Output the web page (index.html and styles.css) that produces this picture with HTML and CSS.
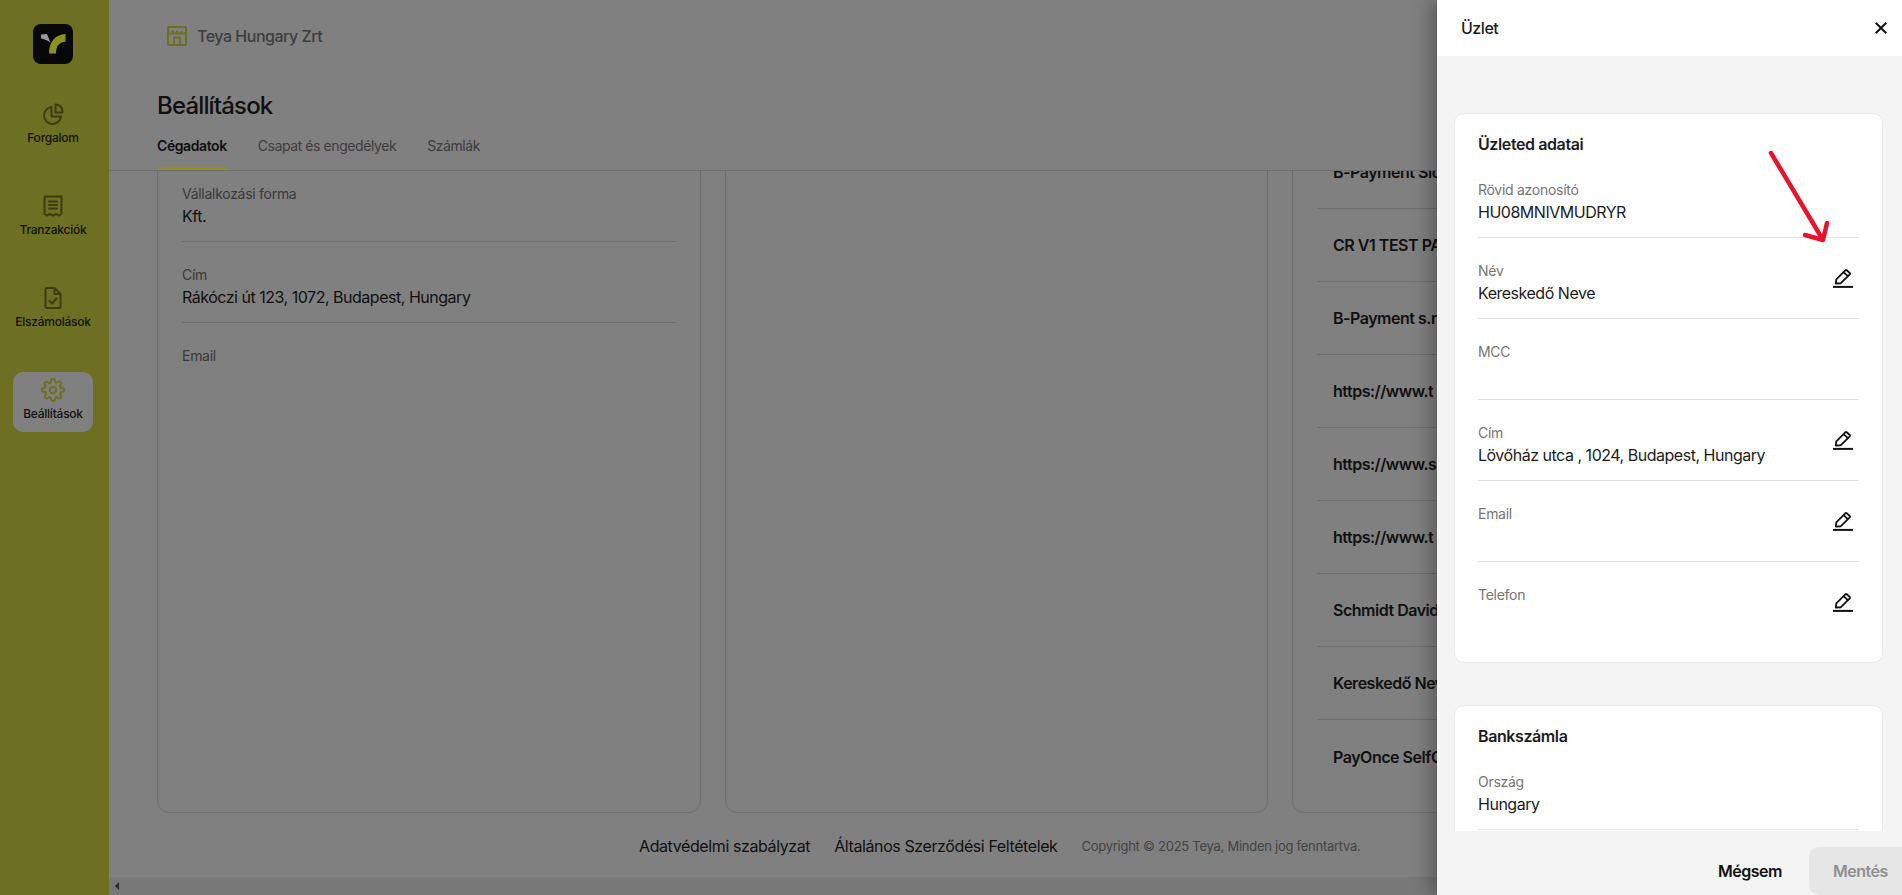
FILE: index.html
```html
<!DOCTYPE html>
<html lang="hu">
<head>
<meta charset="utf-8">
<title>Beállítások</title>
<link rel="stylesheet" href="styles.css">
</head>
<body>
<div class="app">
  <aside class="sidebar">
    <svg class="logo" viewBox="0 0 40 40">
      <rect width="40" height="40" rx="8" fill="#0e0e0e"/>
      <path d="M8 10.5 L14 10 L17.5 18.5 C14.5 16.5 11 15 8 14.5 Z" fill="#fff"/>
      <path d="M32.5 10 C22 10.5 16 18 16 29.5 H23 C23 22 26 18 32.5 17.7 Z" fill="#ebf235"/>
    </svg>
    <nav class="nav">
      <a class="nav-item">
        <svg class="nav-icon" viewBox="0 0 24 24"><path d="M10.5 5 A8.5 8.5 0 1 0 20 14.5 H10.5 Z"/><path d="M14.5 2.5 A7 7 0 0 1 21.5 9.5 V10.5 H14.5 Z"/></svg>
        <span>Forgalom</span>
      </a>
      <a class="nav-item">
        <svg class="nav-icon" viewBox="0 0 24 24"><path d="M3.5 2.5 H20.5 V20 L18 21.5 L15 20 L12 21.5 L9 20 L6 21.5 L3.5 20 Z"/><path d="M8 7.5 H16 M8 11 H16 M8 14.5 H16"/></svg>
        <span>Tranzakciók</span>
      </a>
      <a class="nav-item">
        <svg class="nav-icon" viewBox="0 0 24 24"><path d="M13.5 2 H6 A1.5 1.5 0 0 0 4.5 3.5 V20.5 A1.5 1.5 0 0 0 6 22 H18 A1.5 1.5 0 0 0 19.5 20.5 V8 Z"/><path d="M13.5 2 V8 H19.5"/><path d="M8.5 15 L11 17.5 L15.5 12.5"/></svg>
        <span>Elszámolások</span>
      </a>
      <a class="nav-item active">
        <svg class="nav-icon" viewBox="0 0 24 24"><circle cx="12" cy="12" r="3.2"/><path d="M19.4 15a1.65 1.65 0 0 0 .33 1.82l.06.06a2 2 0 1 1-2.83 2.83l-.06-.06a1.65 1.65 0 0 0-2.82 1.17V21a2 2 0 1 1-4 0v-.09a1.65 1.65 0 0 0-2.82-1.08l-.06.06a2 2 0 1 1-2.83-2.83l.06-.06A1.65 1.65 0 0 0 3.09 14H3a2 2 0 1 1 0-4h.09a1.65 1.65 0 0 0 1.08-2.82l-.06-.06a2 2 0 1 1 2.83-2.83l.06.06A1.65 1.65 0 0 0 10 3.09V3a2 2 0 1 1 4 0v.09a1.65 1.65 0 0 0 2.82 1.08l.06-.06a2 2 0 1 1 2.83 2.83l-.06.06A1.65 1.65 0 0 0 20.91 10H21a2 2 0 1 1 0 4h-.09a1.65 1.65 0 0 0-1.51 1z"/></svg>
        <span>Beállítások</span>
      </a>
    </nav>
  </aside>

  <main class="main">
    <div class="merchant">
      <svg class="store-icon" viewBox="0 0 20 20"><rect x="1" y="1" width="18" height="18" rx="1.5"/><path d="M1 7.5 H19 M5.5 4.5 V7.5 M10 4.5 V7.5 M14.5 4.5 V7.5"/><path d="M7 19 V11.5 H13 V19"/></svg>
      <span>Teya Hungary Zrt</span>
    </div>
    <h1 class="page-title">Beállítások</h1>
    <div class="tabs">
      <a class="tab active">Cégadatok</a>
      <a class="tab">Csapat és engedélyek</a>
      <a class="tab">Számlák</a>
    </div>
    <div class="content">
      <div class="cards">
        <section class="panel panel-company">
          <div class="field"><span class="label">Vállalkozási forma</span><span class="value">Kft.</span></div>
          <div class="field"><span class="label">Cím</span><span class="value">Rákóczi út 123, 1072, Budapest, Hungary</span></div>
          <div class="field field-last"><span class="label">Email</span><span class="value"></span></div>
        </section>
        <section class="panel"></section>
        <section class="panel panel-list">
          <div class="list-row">B-Payment Sid</div>
          <div class="list-row">CR V1 TEST PA</div>
          <div class="list-row">B-Payment s.r.</div>
          <div class="list-row">https://www.t</div>
          <div class="list-row">https://www.s</div>
          <div class="list-row">https://www.t</div>
          <div class="list-row">Schmidt David</div>
          <div class="list-row">Kereskedő Nev</div>
          <div class="list-row">PayOnce SelfC</div>
        </section>
      </div>
      <footer class="page-footer">
        <a>Adatvédelmi szabályzat</a>
        <a>Általános Szerződési Feltételek</a>
        <span class="copyright">Copyright © 2025 Teya, Minden jog fenntartva.</span>
      </footer>
    </div>
    <div class="hscroll"><i class="hscroll-arrow"></i></div>
  </main>
</div>

<div class="overlay"></div>

<aside class="drawer">
  <header class="drawer-head">
    <span>Üzlet</span>
    <svg class="close" viewBox="0 0 12 12"><path d="M.7 .7 L11.3 11.3 M11.3 .7 L.7 11.3"/></svg>
  </header>
  <div class="drawer-body">
    <section class="sheet">
      <h2>Üzleted adatai</h2>
      <div class="field"><div><span class="label">Rövid azonosító</span><span class="value">HU08MNIVMUDRYR</span></div></div>
      <div class="field">
        <div><span class="label">Név</span><span class="value">Kereskedő Neve</span></div>
        <svg class="pencil" viewBox="0 0 20 20"><path d="M2.8 15.5 L3.3 11.3 L12.3 2.3 Q13 1.7 13.7 2.3 L16.8 5 Q17.4 5.7 16.8 6.4 L7.6 15.3 Z"/><path d="M10.5 4.2 L14.9 8.2"/><path class="pencil-line" d="M0 18.9 H20"/></svg>
      </div>
      <div class="field"><div><span class="label">MCC</span><span class="value"></span></div></div>
      <div class="field">
        <div><span class="label">Cím</span><span class="value">Lövőház utca , 1024, Budapest, Hungary</span></div>
        <svg class="pencil" viewBox="0 0 20 20"><path d="M2.8 15.5 L3.3 11.3 L12.3 2.3 Q13 1.7 13.7 2.3 L16.8 5 Q17.4 5.7 16.8 6.4 L7.6 15.3 Z"/><path d="M10.5 4.2 L14.9 8.2"/><path class="pencil-line" d="M0 18.9 H20"/></svg>
      </div>
      <div class="field">
        <div><span class="label">Email</span><span class="value"></span></div>
        <svg class="pencil" viewBox="0 0 20 20"><path d="M2.8 15.5 L3.3 11.3 L12.3 2.3 Q13 1.7 13.7 2.3 L16.8 5 Q17.4 5.7 16.8 6.4 L7.6 15.3 Z"/><path d="M10.5 4.2 L14.9 8.2"/><path class="pencil-line" d="M0 18.9 H20"/></svg>
      </div>
      <div class="field field-last">
        <div><span class="label">Telefon</span><span class="value"></span></div>
        <svg class="pencil" viewBox="0 0 20 20"><path d="M2.8 15.5 L3.3 11.3 L12.3 2.3 Q13 1.7 13.7 2.3 L16.8 5 Q17.4 5.7 16.8 6.4 L7.6 15.3 Z"/><path d="M10.5 4.2 L14.9 8.2"/><path class="pencil-line" d="M0 18.9 H20"/></svg>
      </div>
    </section>
    <section class="sheet">
      <h2>Bankszámla</h2>
      <div class="field"><div><span class="label">Ország</span><span class="value">Hungary</span></div></div>
    </section>
  </div>
  <footer class="drawer-foot">
    <button class="btn-text">Mégsem</button>
    <button class="btn-save">Mentés</button>
  </footer>
</aside>

<svg class="annotation" viewBox="0 0 70 100"><path d="M6 6 L58 93 M62 76 L58 93 L40 88"/></svg>
</body>
</html>
```

FILE: styles.css
```css
* { box-sizing: border-box; }

html, body {
  margin: 0;
  height: 100%;
  overflow: hidden;
}

body {
  position: relative;
  font-family: Inter, "Noto Sans", sans-serif;
  letter-spacing: -0.03em;
  color: #1c1c1c;
  background: #d5d5d5;
}

.app {
  display: flex;
  height: 895px;
}

/* Sidebar */
.sidebar {
  flex: 0 0 109px;
  display: flex;
  flex-direction: column;
  align-items: center;
  padding: 24px 3px 0 0;
  background: #b6bb39;
}

.logo {
  width: 40px;
  height: 40px;
}

.nav {
  display: flex;
  flex-direction: column;
  gap: 32px;
  margin-top: 32px;
}

.nav-item {
  width: 80px;
  height: 60px;
  padding-top: 6px;
  display: flex;
  flex-direction: column;
  align-items: center;
  border-radius: 10px;
  font-size: 12px;
  line-height: 16px;
  font-weight: 500;
  letter-spacing: -0.02em;
  color: #1c1c1c;
}

.nav-item span {
  margin-top: 4px;
}

.nav-item.active {
  background: #d5d5d5;
}

.nav-icon {
  width: 24px;
  height: 24px;
  fill: none;
  stroke: #66671c;
  stroke-width: 2;
  stroke-linejoin: round;
  stroke-linecap: round;
}

.nav-item.active .nav-icon {
  stroke: #b6bb39;
}

/* Main */
.main {
  flex: 1;
  min-width: 0;
  display: flex;
  flex-direction: column;
  overflow: hidden;
}

.merchant {
  display: flex;
  align-items: center;
  gap: 10px;
  padding: 26px 0 0 58px;
  height: 46px;
  font-size: 16px;
  font-weight: 500;
  color: #676767;
}

.store-icon {
  width: 20px;
  height: 20px;
  fill: none;
  stroke: #b6bb39;
  stroke-width: 2;
}

.page-title {
  margin: 44px 0 0 48px;
  font-size: 24px;
  line-height: 32px;
  font-weight: 500;
  letter-spacing: -0.035em;
  color: #1c1c1c;
}

.tabs {
  display: flex;
  gap: 31px;
  margin-top: 14px;
  padding-left: 48px;
  border-bottom: 1px solid #b8b8b8;
  flex: 0 0 auto;
}

.tab {
  height: 34px;
  padding-bottom: 11px;
  font-size: 14px;
  line-height: 20px;
  letter-spacing: -0.03em;
  color: #676767;
  border-bottom: 3px solid transparent;
}

.tab.active {
  color: #1c1c1c;
  font-weight: 600;
  border-bottom-color: #ebf235;
}

.content {
  flex: 1;
  min-height: 0;
  overflow: hidden;
}

.cards {
  display: flex;
  gap: 24px;
  height: 742px;
  margin: -100px 0 0 48px;
}

.panel {
  flex: 0 0 543.5px;
  border: 1px solid #b8b8b8;
  border-radius: 12px;
  padding: 0 24px;
}

.panel-company {
  padding-top: 112px;
}

.panel-list {
  padding-top: 64px;
}

.list-row {
  height: 73px;
  padding-left: 16px;
  display: flex;
  align-items: center;
  border-bottom: 1px solid #b8b8b8;
  font-size: 16px;
  font-weight: 600;
  color: #1c1c1c;
  white-space: nowrap;
}

.list-row:last-child {
  border-bottom: 0;
}

.field {
  display: flex;
  justify-content: space-between;
  align-items: flex-start;
  padding: 23px 0 13px;
  border-bottom: 1px solid #e2e2e2;
}

.panel .field {
  display: block;
  padding-top: 0;
  margin-bottom: 23px;
  border-bottom-color: #b8b8b8;
}

.panel .field-last,
.field-last {
  border-bottom: 0;
}

.label,
.value {
  display: block;
}

.label {
  font-size: 14px;
  line-height: 20px;
  letter-spacing: -0.02em;
  color: #757575;
}

.panel .label {
  color: #616161;
}

.value {
  min-height: 24px;
  font-size: 16px;
  line-height: 24px;
  color: #1c1c1c;
}

.page-footer {
  display: flex;
  align-items: center;
  gap: 24px;
  margin-top: 22px;
  padding-left: 530px;
  font-size: 16px;
  line-height: 22px;
  letter-spacing: -0.025em;
  color: #1c1c1c;
}

.copyright {
  font-size: 13px;
  letter-spacing: -0.02em;
  color: #717171;
}

.hscroll {
  flex: 0 0 18px;
  display: flex;
  align-items: center;
  padding-left: 6px;
  background: #c9c9c9;
}

.hscroll-arrow {
  border: 4px solid transparent;
  border-left: 0;
  border-right: 4px solid #434343;
}

/* Dimmer and drawer */
.overlay {
  position: absolute;
  inset: 0;
  background: rgba(0, 0, 0, 0.4);
}

.drawer {
  position: absolute;
  top: 0;
  right: 0;
  bottom: 0;
  width: 465px;
  display: flex;
  flex-direction: column;
  overflow: hidden;
  background: #f4f4f4;
  box-shadow: -6px 0 18px rgba(0, 0, 0, 0.3);
}

.drawer-head {
  flex: 0 0 56px;
  display: flex;
  justify-content: space-between;
  align-items: center;
  padding: 0 15px 0 24px;
  background: #fff;
  font-size: 16px;
  font-weight: 500;
}

.close {
  width: 12px;
  height: 12px;
  fill: none;
  stroke: #111;
  stroke-width: 2;
}

.drawer-body {
  flex: 1;
  min-height: 0;
  overflow: hidden;
  padding: 57px 19px 0 17px;
}

.sheet {
  margin-bottom: 42px;
  padding: 18px 23px 20px;
  background: #fff;
  border: 1px solid #ebebeb;
  border-radius: 10px;
}

.sheet h2 {
  margin: 0 0 1px;
  font-size: 16px;
  line-height: 24px;
  font-weight: 600;
  letter-spacing: -0.025em;
  color: #1c1c1c;
}

.pencil {
  flex: 0 0 20px;
  width: 20px;
  height: 20px;
  margin: 7px 6px 0 0;
  fill: none;
  stroke: #111;
  stroke-width: 1.8;
  stroke-linejoin: round;
}

.pencil-line {
  stroke-width: 2;
}

.drawer-foot {
  flex: 0 0 64px;
  display: flex;
  justify-content: flex-end;
  align-items: flex-end;
  gap: 27px;
}

.btn-text,
.btn-save {
  height: 48px;
  border: 0;
  font-family: inherit;
  letter-spacing: -0.03em;
  font-size: 16px;
  font-weight: 600;
}

.btn-text {
  padding: 0;
  background: none;
  color: #111;
}

.btn-save {
  width: 93px;
  padding: 0 0 0 24px;
  text-align: left;
  border-radius: 10px 0 0 10px;
  background: #e6e6e6;
  color: #8f8f8f;
}

.annotation {
  position: absolute;
  left: 1765px;
  top: 147px;
  width: 70px;
  height: 100px;
  fill: none;
  stroke: #e6142d;
  stroke-width: 4.5;
  stroke-linecap: round;
  stroke-linejoin: round;
}
```
